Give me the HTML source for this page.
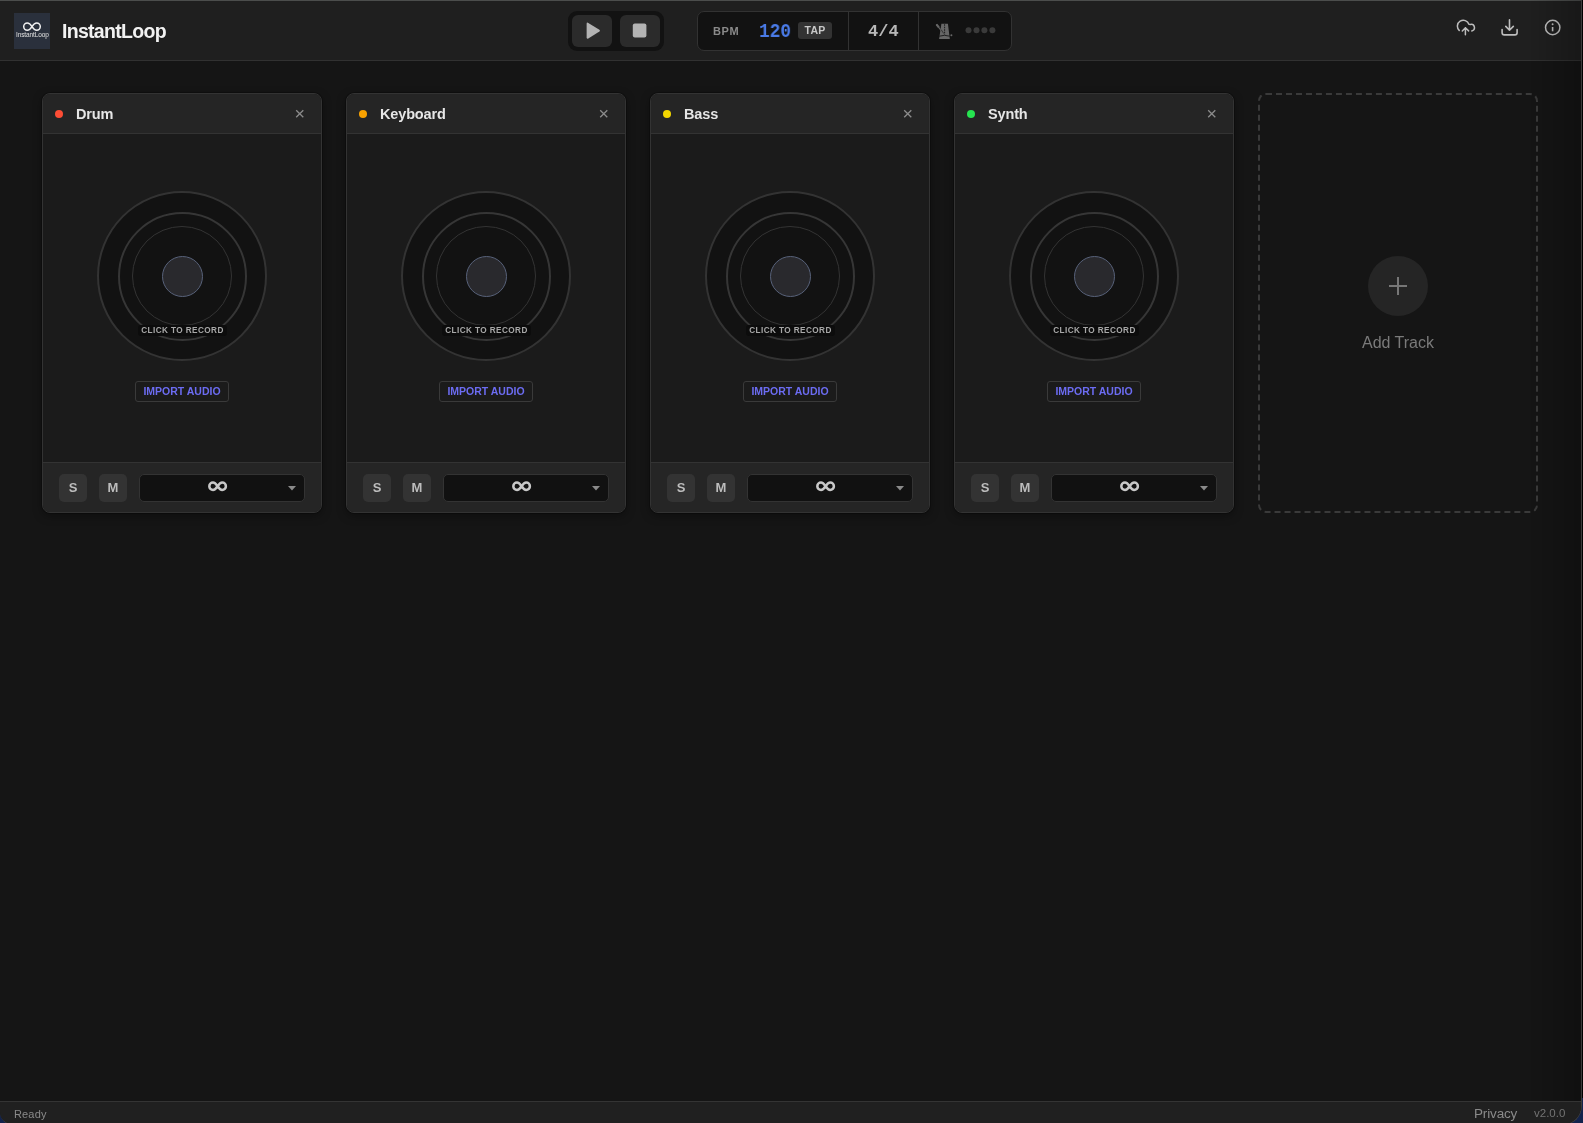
<!DOCTYPE html>
<html><head><meta charset="utf-8">
<style>
*{box-sizing:border-box;margin:0;padding:0}
html,body{width:1583px;height:1123px;overflow:hidden;background:#000;font-family:"Liberation Sans",sans-serif;-webkit-font-smoothing:antialiased}
.win *{will-change:transform}
.desk{position:absolute;left:0;top:1098px;width:1583px;height:25px;background:#12224c}
.win{position:absolute;left:0;top:0;width:1582px;height:1125px;background:#151515;border-right:1px solid #3b3b3b;border-bottom:1px solid #3b3b3b;border-radius:0 0 19px 13px;overflow:hidden}
.topline{position:absolute;left:0;top:0;width:1582px;height:1px;background:#4b4d4c}
.hdr{position:absolute;left:0;top:1px;width:1581px;height:60px;background:#1f1f1f;border-bottom:1px solid #313131}
.logo{position:absolute;left:14px;top:12px;width:36px;height:36px;background:#2a303c}
.brand{position:absolute;left:62px;top:19px;font-size:19.5px;line-height:23px;font-weight:bold;color:#f2f2f2;letter-spacing:-0.7px}
.abs{position:absolute}
.tr{position:absolute;left:568px;top:11px;width:96px;height:40px;background:#121212;border-radius:9px}
.tbtn{position:absolute;top:4px;width:40px;height:32px;background:#2b2b2b;border-radius:6px}
.bpm{position:absolute;left:697px;top:11px;width:315px;height:40px;background:#121212;border:1px solid #323232;border-radius:7px}
.card{position:absolute;top:93px;width:280px;height:420px;background:#1b1b1b;border:1px solid #333;border-radius:8px;overflow:hidden;box-shadow:0 0 0 1px rgba(0,0,0,0.25),0 3px 10px rgba(0,0,0,0.35)}
.ch{position:absolute;left:0;top:0;width:278px;height:40px;background:#252525;border-bottom:1px solid #333}
.dot{position:absolute;left:12px;top:16px;width:8px;height:8px;border-radius:50%}
.cname{position:absolute;left:32.5px;top:12px;font-size:14.5px;line-height:16px;font-weight:bold;color:#e6e6e6;letter-spacing:-0.15px}
.cx{position:absolute;left:251.5px;top:14.5px}
.ring1{position:absolute;left:54px;top:97px;width:170px;height:170px;border-radius:50%;border:2px solid #333;background:#121212}
.ring2{position:absolute;left:74.5px;top:117.5px;width:129px;height:129px;border-radius:50%;border:2px solid #363636}
.ring3{position:absolute;left:89px;top:132px;width:100px;height:100px;border-radius:50%;border:1.5px solid #343434}
.knob{position:absolute;left:118.5px;top:161.5px;width:41px;height:41px;border-radius:50%;border:1.8px solid #58627a;background:#29292d}
.lbl{position:absolute;left:94.5px;top:230.5px;width:89px;height:11px;background:#0c0c0c;border-radius:3px;font-size:8.2px;font-weight:bold;color:#a8a8a8;letter-spacing:0.42px;text-align:center;line-height:11.5px;white-space:nowrap}
.imp{position:absolute;left:92px;top:287px;width:94px;height:21px;border:1px solid #3a3a3a;border-radius:3px;color:#6c6cf2;font-size:10.5px;font-weight:bold;text-align:center;line-height:19.5px;white-space:nowrap}
.cf{position:absolute;left:0;top:368px;width:278px;height:50px;background:#252525;border-top:1px solid #333}
.sm{position:absolute;top:11px;width:28px;height:28px;background:#333;border-radius:5px;color:#bdbdbd;font-size:13px;font-weight:bold;text-align:center;line-height:28px}
.sel{position:absolute;left:96px;top:11px;width:166px;height:28px;background:#111;border:1px solid #333;border-radius:5px}
.inf{position:absolute;left:65.6px;top:5px}
.arr{position:absolute;left:148.4px;top:10.7px}
.add{position:absolute;left:1258px;top:93px;width:280px;height:420px;border:2px dashed #3a3a3a;border-radius:8px}
.plus{position:absolute;left:108px;top:161px;width:60px;height:60px;border-radius:50%;background:#252525}
.addt{position:absolute;left:0;width:276px;top:239px;text-align:center;font-size:16px;line-height:18px;color:#7a7a7a}
.status{position:absolute;left:0;top:1101px;width:1581px;height:23px;background:#202020;border-top:1px solid #343434}
.st{position:absolute;font-size:11px;line-height:13px;color:#8a8a8a}
</style></head><body>
<div class="desk"></div>
<div class="win">
  <div class="topline"></div>
  <div class="hdr">
    <div class="logo"></div>
    <div class="brand">InstantLoop</div>
  </div>
  <div class="tr">
    <div class="tbtn" style="left:4px"></div>
    <div class="tbtn" style="left:52px"></div>
  </div>
  <div class="bpm">
    <div class="abs" style="left:15px;top:13px;font-size:11px;line-height:13px;font-weight:bold;color:#8a8a8a;letter-spacing:0.6px">BPM</div>
    <div class="abs" style="left:61px;top:8px;font-family:'Liberation Mono',monospace;font-size:20px;line-height:23px;font-weight:bold;color:#4a7be8;transform:scaleX(0.89);transform-origin:0 0">120</div>
    <div class="abs" style="left:100px;top:10px;width:34px;height:17px;background:#333;border-radius:3px;color:#c8c8c8;font-size:10.5px;font-weight:bold;line-height:17px;text-align:center;letter-spacing:0.2px">TAP</div>
    <div class="abs" style="left:150px;top:-1px;width:1px;height:40px;background:#323232"></div>
    <div class="abs" style="left:170px;top:10px;font-family:'Liberation Mono',monospace;font-size:17px;line-height:20px;font-weight:bold;color:#b8b8b8">4/4</div>
    <div class="abs" style="left:220px;top:-1px;width:1px;height:40px;background:#323232"></div>
  </div>
  <svg class="abs" style="left:0;top:0" width="1583" height="62" viewBox="0 0 1583 62">
    <!-- logo -->
    <path d="M32 26.6C30.6 24.4 29.3 23 27.3 23A3.6 3.6 0 0 0 27.3 30.2C29.3 30.2 30.6 28.8 32 26.6C33.4 24.4 34.7 23 36.7 23A3.6 3.6 0 0 1 36.7 30.2C34.7 30.2 33.4 28.8 32 26.6Z" stroke="#f0f0f0" stroke-width="1.5" fill="none"/>
    <text x="32.3" y="37.3" text-anchor="middle" font-family="Liberation Sans" font-size="6.5" fill="#e0e0e0" letter-spacing="-0.12">InstantLoop</text>
    <!-- play -->
    <path d="M588.3 22.9Q586.6 22 586.6 24V37.3Q586.6 39.3 588.3 38.4L599.4 31.6Q600.6 30.7 599.4 29.8Z" fill="#b3b3b3"/>
    <rect x="632.8" y="23.6" width="13.6" height="13.8" rx="2" fill="#b3b3b3"/>
    <!-- metronome -->
    <path d="M941.4 23.8H947.9L949.8 39.1H939.1Z" fill="#676767"/>
    <path d="M944.6 24.2V34.6" stroke="#151515" stroke-width="0.9" stroke-dasharray="1.6 0.9" fill="none"/>
    <path d="M939.3 36.2Q944.5 34.4 949.7 36.2" stroke="#151515" stroke-width="0.9" fill="none"/>
    <path d="M936.3 24.4L943.3 33.2" stroke="#676767" stroke-width="1.2" fill="none"/>
    <path d="M936.5 24.3L938.9 27.4" stroke="#676767" stroke-width="2.1" fill="none"/>
    <path d="M941 29.5L943.8 33.6" stroke="#151515" stroke-width="0.6" fill="none"/>
    <circle cx="951.4" cy="35.3" r="1" fill="#676767"/>
    <circle cx="968.5" cy="30.2" r="3" fill="#3a3a3a"/>
    <circle cx="976.5" cy="30.2" r="3" fill="#3a3a3a"/>
    <circle cx="984.4" cy="30.2" r="3" fill="#3a3a3a"/>
    <circle cx="992.4" cy="30.2" r="3" fill="#3a3a3a"/>
    <!-- upload cloud -->
    <g stroke="#bdbdbd" stroke-width="1.5" fill="none" stroke-linecap="round" stroke-linejoin="round">
      <path d="M1459.2 30.4A5.9 5.9 0 1 1 1468.9 24.3L1470.4 24.4A3.3 3.3 0 0 1 1471.8 30.9"/>
      <path d="M1465.4 34.8V27.8M1462.3 30.9L1465.4 27.7L1468.6 30.9"/>
    </g>
    <!-- download -->
    <g stroke="#bdbdbd" stroke-width="1.6" fill="none" stroke-linecap="round" stroke-linejoin="round">
      <path d="M1502.1 29.6V32.7A2.2 2.2 0 0 0 1504.3 34.9H1514.9A2.2 2.2 0 0 0 1517.1 32.7V29.6"/>
      <path d="M1509.5 19.9V30.2M1505.8 26.4L1509.5 30.2L1513.3 26.4"/>
    </g>
    <!-- info -->
    <circle cx="1552.7" cy="27.5" r="7.2" stroke="#bdbdbd" stroke-width="1.5" fill="none"/>
    <circle cx="1552.6" cy="24.3" r="0.95" fill="#bdbdbd"/>
    <path d="M1552.6 27V31.3" stroke="#bdbdbd" stroke-width="1.6"/>
  </svg>

  <div class="card" style="left:42px">
    <div class="ch"><div class="dot" style="background:#fd4d35"></div><div class="cname">Drum</div>
      <svg class="cx" width="10" height="10" viewBox="0 0 10 10"><path d="M1.2 1.2L8.3 8.3M8.3 1.2L1.2 8.3" stroke="#8c8c8c" stroke-width="1.3" fill="none"/></svg></div>
    <div class="ring1"></div><div class="ring2"></div><div class="ring3"></div><div class="knob"></div>
    <div class="lbl">CLICK TO RECORD</div>
    <div class="imp">IMPORT AUDIO</div>
    <div class="cf"><div class="sm" style="left:16px">S</div><div class="sm" style="left:56px">M</div>
      <div class="sel"><svg class="inf" width="22" height="12" viewBox="0 0 22 12"><path d="M11.6 6.2C10 3.8 8.8 2.5 7 2.5A3.7 3.7 0 0 0 7 9.9C8.8 9.9 10 8.6 11.6 6.2C13.2 3.8 14.4 2.5 16.2 2.5A3.7 3.7 0 0 1 16.2 9.9C14.4 9.9 13.2 8.6 11.6 6.2Z" stroke="#c8c8c8" stroke-width="2.5" fill="none"/></svg>
      <svg class="arr" width="8" height="5" viewBox="0 0 8 5"><path d="M0 0H8L4 4.5Z" fill="#8a8a8a"/></svg></div></div>
  </div>
  <div class="card" style="left:346px">
    <div class="ch"><div class="dot" style="background:#f9a200"></div><div class="cname">Keyboard</div>
      <svg class="cx" width="10" height="10" viewBox="0 0 10 10"><path d="M1.2 1.2L8.3 8.3M8.3 1.2L1.2 8.3" stroke="#8c8c8c" stroke-width="1.3" fill="none"/></svg></div>
    <div class="ring1"></div><div class="ring2"></div><div class="ring3"></div><div class="knob"></div>
    <div class="lbl">CLICK TO RECORD</div>
    <div class="imp">IMPORT AUDIO</div>
    <div class="cf"><div class="sm" style="left:16px">S</div><div class="sm" style="left:56px">M</div>
      <div class="sel"><svg class="inf" width="22" height="12" viewBox="0 0 22 12"><path d="M11.6 6.2C10 3.8 8.8 2.5 7 2.5A3.7 3.7 0 0 0 7 9.9C8.8 9.9 10 8.6 11.6 6.2C13.2 3.8 14.4 2.5 16.2 2.5A3.7 3.7 0 0 1 16.2 9.9C14.4 9.9 13.2 8.6 11.6 6.2Z" stroke="#c8c8c8" stroke-width="2.5" fill="none"/></svg>
      <svg class="arr" width="8" height="5" viewBox="0 0 8 5"><path d="M0 0H8L4 4.5Z" fill="#8a8a8a"/></svg></div></div>
  </div>
  <div class="card" style="left:650px">
    <div class="ch"><div class="dot" style="background:#f3d600"></div><div class="cname">Bass</div>
      <svg class="cx" width="10" height="10" viewBox="0 0 10 10"><path d="M1.2 1.2L8.3 8.3M8.3 1.2L1.2 8.3" stroke="#8c8c8c" stroke-width="1.3" fill="none"/></svg></div>
    <div class="ring1"></div><div class="ring2"></div><div class="ring3"></div><div class="knob"></div>
    <div class="lbl">CLICK TO RECORD</div>
    <div class="imp">IMPORT AUDIO</div>
    <div class="cf"><div class="sm" style="left:16px">S</div><div class="sm" style="left:56px">M</div>
      <div class="sel"><svg class="inf" width="22" height="12" viewBox="0 0 22 12"><path d="M11.6 6.2C10 3.8 8.8 2.5 7 2.5A3.7 3.7 0 0 0 7 9.9C8.8 9.9 10 8.6 11.6 6.2C13.2 3.8 14.4 2.5 16.2 2.5A3.7 3.7 0 0 1 16.2 9.9C14.4 9.9 13.2 8.6 11.6 6.2Z" stroke="#c8c8c8" stroke-width="2.5" fill="none"/></svg>
      <svg class="arr" width="8" height="5" viewBox="0 0 8 5"><path d="M0 0H8L4 4.5Z" fill="#8a8a8a"/></svg></div></div>
  </div>
  <div class="card" style="left:954px">
    <div class="ch"><div class="dot" style="background:#26e450"></div><div class="cname">Synth</div>
      <svg class="cx" width="10" height="10" viewBox="0 0 10 10"><path d="M1.2 1.2L8.3 8.3M8.3 1.2L1.2 8.3" stroke="#8c8c8c" stroke-width="1.3" fill="none"/></svg></div>
    <div class="ring1"></div><div class="ring2"></div><div class="ring3"></div><div class="knob"></div>
    <div class="lbl">CLICK TO RECORD</div>
    <div class="imp">IMPORT AUDIO</div>
    <div class="cf"><div class="sm" style="left:16px">S</div><div class="sm" style="left:56px">M</div>
      <div class="sel"><svg class="inf" width="22" height="12" viewBox="0 0 22 12"><path d="M11.6 6.2C10 3.8 8.8 2.5 7 2.5A3.7 3.7 0 0 0 7 9.9C8.8 9.9 10 8.6 11.6 6.2C13.2 3.8 14.4 2.5 16.2 2.5A3.7 3.7 0 0 1 16.2 9.9C14.4 9.9 13.2 8.6 11.6 6.2Z" stroke="#c8c8c8" stroke-width="2.5" fill="none"/></svg>
      <svg class="arr" width="8" height="5" viewBox="0 0 8 5"><path d="M0 0H8L4 4.5Z" fill="#8a8a8a"/></svg></div></div>
  </div>
  <div class="add"><div class="plus"><svg class="abs" style="left:20px;top:20px" width="20" height="20" viewBox="0 0 20 20"><path d="M10 1V19M1 10H19" stroke="#777" stroke-width="2"/></svg></div><div class="addt">Add Track</div></div>
  <div class="abs" style="left:1531px;top:0;width:50px;height:1124px;background:linear-gradient(90deg,rgba(0,0,0,0),rgba(0,0,0,0.22))"></div>
  <div class="status">
    <div class="st" style="left:14px;top:6px;letter-spacing:0.15px">Ready</div>
    <div class="st" style="left:1474px;top:3.5px;font-size:13.5px;line-height:16px;letter-spacing:-0.15px">Privacy</div>
    <div class="st" style="left:1533.5px;top:5px;color:#737373;font-size:11.5px">v2.0.0</div>
  </div>
</div>
</body></html>
